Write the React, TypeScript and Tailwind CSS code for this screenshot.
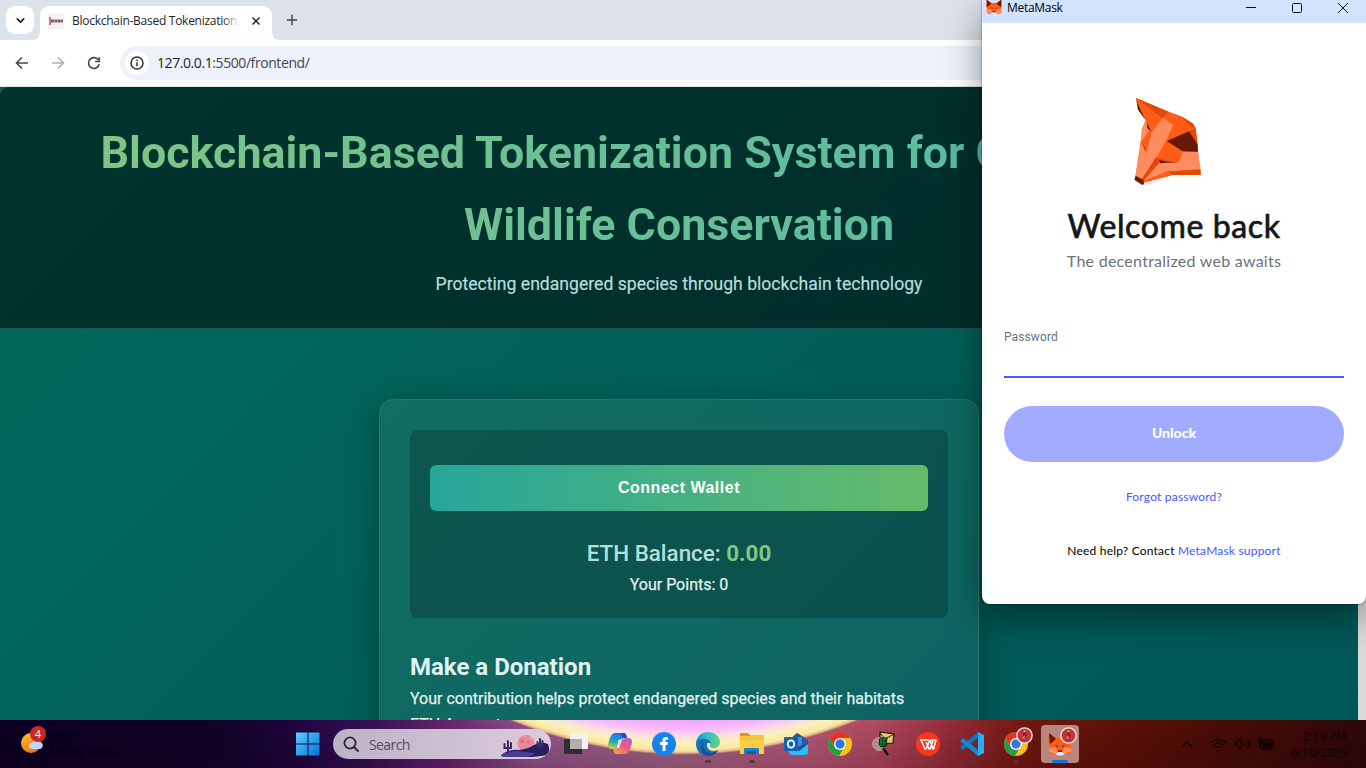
import React from "react";
import { ChevronDown, Plus, Wifi, X } from "lucide-react";

const segoe = "font-['Open_Sans','Noto_Sans',sans-serif]";
const lato = "font-['Lato','Open_Sans',sans-serif]";

function TabStrip() {
  return (
    <div className={`flex h-10 shrink-0 bg-[#dde1e9] ${segoe}`}>
      <div className="mt-[6px] ml-[6px] flex h-7 w-7 items-center justify-center rounded-[9px] bg-white">
        <ChevronDown size={13} strokeWidth={3} color="#1f1f1f" />
      </div>
      <div className="relative mt-[6px] ml-[6px] flex h-[34px] w-[232px] items-center rounded-t-[9px] bg-white pb-[5px] pl-2">
        <svg className="absolute -left-2 bottom-0" width="8" height="8"><path d="M8 0v8H0A8 8 0 0 0 8 0" fill="#fff" /></svg>
        <svg className="absolute -right-2 bottom-0" width="8" height="8"><path d="M0 0v8h8A8 8 0 0 1 0 0" fill="#fff" /></svg>
        <svg width="16" height="16" className="shrink-0">
          <rect width="16" height="16" fill="#f3f3f3" />
          <path d="M2 4v8" stroke="#c9485a" strokeWidth="1.5" />
          <path d="M3 8h12" stroke="#5d4d51" strokeWidth="3" strokeDasharray="3 .4" opacity=".85" />
        </svg>
        <div className="relative ml-2 w-[167px] overflow-hidden text-[12px] tracking-[-0.27px] whitespace-nowrap text-[#1f1f1f]">
          Blockchain-Based Tokenization S
          <div className="absolute top-0 right-0 h-full w-4 bg-gradient-to-r from-transparent to-white" />
        </div>
        <X size={12} strokeWidth={3} color="#1f1f1f" className="ml-[11px] shrink-0" />
      </div>
      <Plus size={16} strokeWidth={2.2} color="#474747" className="mt-3 ml-3" />
    </div>
  );
}

function Toolbar() {
  return (
    <div className="flex h-[47px] shrink-0 items-center border-b border-[#dfe3e3] bg-white pl-[14px]">
      <svg width="16" height="16" viewBox="0 0 16 16" fill="none" stroke="#474747" strokeWidth="1.6"><path d="M14 8H3M8 2.5 2.5 8 8 13.5" /></svg>
      <svg className="ml-5" width="16" height="16" viewBox="0 0 16 16" fill="none" stroke="#aeb0b2" strokeWidth="1.6"><path d="M2 8h11M8 2.5 13.5 8 8 13.5" /></svg>
      <svg className="ml-5" width="16" height="16" viewBox="0 0 16 16" fill="none" stroke="#474747" strokeWidth="1.7">
        <path d="M13.2 9.2A5.4 5.4 0 1 1 12.4 5" /><path d="M13.3 2.3v4.2H9.1" />
      </svg>
      <div className="ml-[18px] flex h-[34px] flex-1 items-center rounded-l-full bg-[#ecf1fa] pl-[5px]">
        <div className="flex h-6 w-6 items-center justify-center rounded-full bg-white">
          <svg width="14" height="14" viewBox="0 0 14 14" fill="none" stroke="#333" strokeWidth="1.5">
            <circle cx="7" cy="7" r="6" /><path d="M7 6.2v4.1M7 3.5V5" />
          </svg>
        </div>
        <span className={`ml-2 -mt-px text-[14px] tracking-[-0.42px] text-[#474747] ${segoe}`}>
          <span className="text-[#1f1f1f]">127.0.0.1</span>:5500/frontend/
        </span>
      </div>
    </div>
  );
}

function DonationPage() {
  return (
    <div className="flex min-h-0 flex-1 overflow-hidden rounded-tl-lg bg-[#dadada] font-[Roboto,sans-serif]">
      <main className="w-[1358px] shrink-0 overflow-hidden bg-[linear-gradient(135deg,#006b5d,#005f58_50%,#005757)]">
        <header className="h-[242px] border-b border-white/15 bg-[linear-gradient(135deg,#00342e,#002b2a)] pt-[30px]">
          <div className="mx-5 bg-[linear-gradient(90deg,#81c784,#4db6ac)] bg-clip-text text-[44.8px] leading-[71.7px] font-bold whitespace-nowrap text-transparent">
            <div className="pl-[80.5px]">Blockchain-Based Tokenization System for C</div>
            <div className="text-center">Wildlife Conservation</div>
          </div>
          <p className="mt-[10px] text-center text-[17.6px] leading-7 text-[#b2dfdb] [-webkit-text-stroke:0.2px_#b2dfdb]">Protecting endangered species through blockchain technology</p>
        </header>
        <section className="mx-auto mt-[70px] h-[420px] w-[600px] rounded-[15px] border border-white/10 bg-[linear-gradient(135deg,#106d61,#0e6262)] p-[30px] shadow-[0_8px_32px_rgba(0,0,0,0.3)]">
          <div className="flex h-[188px] flex-col items-center rounded-lg bg-black/20 px-5 pt-[35px]">
            <button className="h-[46px] w-full rounded-md bg-[linear-gradient(90deg,#26a69a,#66bb6a)] font-['Liberation_Sans',sans-serif] text-[16px] font-bold tracking-[0.5px] text-white">Connect Wallet</button>
            <div className="mt-[24px] text-[22.4px] leading-9 font-medium text-[#b2dfdb]">ETH Balance: <span className="font-bold text-[#81c784]">0.00</span></div>
            <div className="mt-px text-[16px] leading-[26px] text-[#e0f2f1] [-webkit-text-stroke:0.25px_#e0f2f1]">Your Points: 0</div>
          </div>
          <h2 className="mt-[30px] text-[24px] leading-[38px] font-bold text-[#e0f2f1]">Make a Donation</h2>
          <p className="text-[16px] leading-[25.6px] text-[#e0f2f1] [-webkit-text-stroke:0.25px_#e0f2f1]">Your contribution helps protect endangered species and their habitats</p>
          <p className="text-[16px] leading-[25.6px] text-[#e0f2f1] [-webkit-text-stroke:0.25px_#e0f2f1]">ETH Amount</p>
        </section>
      </main>
    </div>
  );
}

function FoxProfile() {
  return (
    <svg className="ml-[-12px]" width="68" height="89" viewBox="72 36 204 267">
      <path fill="#ff5c16" d="M78 39 176 80 212 93 248 115 257 130 264 200 272 270H185L100 294 76 276 92 170 98 130 107 106 84 73Z" />
      <path fill="#e34807" d="m78 39 97 41-17 20Z M212 93l36 22 9 15-18-7Z M190 120l67 10 6 48-25-40Z" />
      <path fill="#ff5c16" d="m190 120 67 10-20 9-67 29Z" />
      <path fill="#ff8d5d" d="m158 99 32 21-22 48-28 50-44 64-20-6 13-78 5-26 14 34 6-24 12-42Z M107 106l10 30-14 22-11 14 3-40Z" />
      <path fill="#ff8d5d" d="M103 286 150 230l55 2 12-32h47l8 53-102 7-62 32Z" />
      <path fill="#e34807" d="m96 281 43-66 66 17-55-2-50 57Z M170 260l102-7v17h-82l-34-2Z" />
      <path fill="#ff5c16" d="m140 218 28-50 50 32-12 32-56-10Z M170 260l20 10-90 22 4-6Z" />
      <path fill="#661800" d="m170 168 67-29 26 39 1 22-46-1Z M148 225l25 6 32 1-55 3Z M78 39l5 17 22 47-21-29Z M110 112l13 27-11-9Z M95 170l12 23-1 2Z M77 272l23 12 2 13-5 3-24-16Z" />
      <path fill="#e7ebf6" d="m102 294 83-22-65 26-17 3Z" />
    </svg>
  );
}

function FoxFace({ size }: { size: number }) {
  return (
    <svg width={size} height={size} viewBox="0 0 24 24">
      <path fill="#ff5c16" d="m1 1 8 5h6l8-5 1 9-2 6 1 5-6 2-3-1h-4l-3 1-6-2 1-5-2-6Z" />
      <path fill="#661800" d="m1 1 7 6-6 5ZM23 1l-7 6 6 5Z" />
      <path fill="#ff8d5d" d="m1 16 7-1 1 5-2 2-6-2ZM23 16l-7-1-1 5 2 2 6-2Z" />
      <path fill="#233447" d="m6 12.500 4 1.500v1.500ZM18 12.500l-4 1.500v1.500ZM10 18.500h4v2h-4Z" />
      <path fill="#e7ebf6" d="m7 22 3-2h4l3 2-3 1.500h-4Z" />
    </svg>
  );
}

function MetaMaskWindow() {
  return (
    <div className={`absolute top-0 left-[982px] flex h-[604px] w-[384px] flex-col overflow-hidden rounded-b-lg bg-white ${lato}`}>
      <div className={`flex h-[23px] shrink-0 bg-[#d3e3fd] ${segoe}`}>
        <div className="mt-[-1px] ml-1"><FoxFace size={16} /></div>
        <span className="ml-[5px] text-[12px] leading-[16px] tracking-[-0.3px] text-black">MetaMask</span>
        <svg className="ml-auto" width="121" height="16" fill="none" stroke="#111" strokeWidth="1">
          <path d="M1 7.500h10M93 3l10 10M103 3 93 13" /><rect x="47.500" y="3.500" width="9" height="9" rx="1" />
        </svg>
      </div>
      <div className="flex flex-1 flex-col items-center px-[22px] pt-[74px]">
        <FoxProfile />
        <h1 className="mt-[18px] text-[32px] leading-[44px] tracking-[0.62px] whitespace-nowrap text-[#141618] [-webkit-text-stroke:0.7px_#141618]">Welcome back</h1>
        <p className="mt-px mb-px text-[16px] leading-6 tracking-[0.26px] whitespace-nowrap text-[#6a737d]">The decentralized web awaits</p>
        <label className="mt-[54px] flex h-[50px] w-full flex-col border-b-2 border-[#4459ff] font-[Roboto,sans-serif] text-[12px] leading-[18px] tracking-[0.1px] text-[#6a737d]">Password</label>
        <button className="mt-7 h-14 w-full shrink-0 rounded-full bg-[#a1abff] pb-[3px] text-[14px] font-black text-white">Unlock</button>
        <div className="mt-[25px] text-[12px] leading-5 tracking-[0.2px] text-[#4459ff]">Forgot password?</div>
        <div className="mt-[34px] text-[12px] leading-5 tracking-[0.2px] text-black">Need help? Contact <span className="text-[#4459ff]">MetaMask support</span></div>
      </div>
    </div>
  );
}

function Wallpaper() {
  return (
    <svg className="absolute inset-0" width="1366" height="48" viewBox="0 720 1366 48">
      <defs>
        <linearGradient id="wall">
          <stop offset="0" stopColor="#0c0022" /><stop offset=".16" stopColor="#110228" /><stop offset=".22" stopColor="#200540" />
          <stop offset=".27" stopColor="#380f55" /><stop offset=".33" stopColor="#68266e" /><stop offset=".39" stopColor="#94558c" />
          <stop offset=".5" stopColor="#a66484" /><stop offset=".59" stopColor="#b65878" /><stop offset=".64" stopColor="#b34a60" />
          <stop offset=".7" stopColor="#942a34" /><stop offset=".75" stopColor="#74170d" /><stop offset=".83" stopColor="#5b1005" />
          <stop offset=".92" stopColor="#440b06" /><stop offset="1" stopColor="#2d0709" />
        </linearGradient>
        <linearGradient id="wallShade" x1="0" y1="0" x2="0" y2="1"><stop stopColor="#000" stopOpacity="0" /><stop offset="1" stopColor="#180010" stopOpacity=".2" /></linearGradient>
        <radialGradient id="arc" gradientUnits="userSpaceOnUse" cx="684" cy="295" r="460">
          <stop offset=".93" stopColor="#f6a9fc" /><stop offset=".946" stopColor="#f9bdf8" /><stop offset=".962" stopColor="#fce0e0" />
          <stop offset=".975" stopColor="#fdf0b8" /><stop offset=".99" stopColor="#fae7a0" /><stop offset=".996" stopColor="#e0b284" /><stop offset="1" stopColor="#b77a80" stopOpacity="0" />
        </radialGradient>
      </defs>
      <rect y="720" width="1366" height="48" fill="url(#wall)" /><rect y="720" width="1366" height="48" fill="url(#wallShade)" />
      <circle cx="684" cy="295" r="460" fill="url(#arc)" />
    </svg>
  );
}

function Slot({ children, running }: { children: React.ReactNode; running?: boolean }) {
  return (
    <div className="relative flex h-12 w-11 shrink-0 items-center justify-center">
      {children}
      {running && <div className="absolute bottom-[5px] left-[19px] h-[3px] w-[6px] rounded-full bg-[#5a3038]/90" />}
    </div>
  );
}

function ChromeIcon() {
  return (
    <svg width="24" height="24" viewBox="0 0 24 24">
      <circle cx="12" cy="12" r="12" fill="#fbc116" />
      <path fill="#df3428" d="M1.600 6a12 12 0 0 1 20.800 0H12L6.800 15Z" />
      <path fill="#269b48" d="M1.600 6 6.800 15l5.200 3 3-1-4 7A12 12 0 0 1 1.600 6" />
      <circle cx="12" cy="12" r="6" fill="#fff" /><circle cx="12" cy="12" r="4.700" fill="#3077e9" />
    </svg>
  );
}

function ProfileBadge() {
  return (
    <svg className="absolute top-[7px] right-[5px]" width="17" height="17" viewBox="0 0 16 16">
      <circle cx="8" cy="8" r="7.200" fill="#b83a38" stroke="#e4eaee" strokeWidth="1.300" />
      <path d="m3 5 2-1 2 4-2 4ZM10 4l3 2-2 6-2-2Z" fill="#d32f30" /><path d="m7 3 2 1 1 4-2 5-2-2Z" fill="#8f2226" /><path d="M7 3h2v2H7ZM6 10l2-2v4Z" fill="#dca596" />
    </svg>
  );
}

function Taskbar() {
  return (
    <div className={`relative flex h-12 shrink-0 ${segoe}`}>
      <Wallpaper />
      <div className="relative flex w-[286px] pt-[5px] pl-5">
        <svg width="28" height="32" viewBox="0 0 28 32">
          <defs><linearGradient id="sun" x1="0" y1="0" x2=".6" y2="1"><stop stopColor="#f9c72f" /><stop offset="1" stopColor="#ef7417" /></linearGradient></defs>
          <circle cx="11" cy="18" r="10" fill="url(#sun)" />
          <path d="M12 24a3 3 0 0 1 0-6 5 5 0 0 1 8-1 3.600 3.600 0 0 1 0 7Z" fill="#bcd5f8" />
          <circle cx="18" cy="9" r="8" fill="#c52b20" />
          <text x="18" y="13" textAnchor="middle" fontSize="11" fill="#fff">4</text>
        </svg>
        <div className="ml-[2px] pt-[3px] text-[12px] leading-4 tracking-[-0.3px] text-[#030108]"><div>78°F</div><div>Mostly sunny</div></div>
      </div>
      <Slot>
        <svg width="24" height="24" viewBox="0 0 24 24">
          <defs><linearGradient id="win" gradientUnits="userSpaceOnUse" x1="0" y1="0" x2="24" y2="24"><stop stopColor="#5bd3ff" /><stop offset="1" stopColor="#0070d8" /></linearGradient></defs>
          <path fill="url(#win)" d="M0 .5h11.500v11H0zM12.500.5h11v11h-11zM0 12.500h11.500v11H0zM12.500 12.500h11v11h-11z" />
        </svg>
      </Slot>
      <div className="relative mt-[9px] ml-[3px] flex h-[30px] w-[218px] items-center overflow-hidden rounded-full bg-[linear-gradient(90deg,#bcb2c7,#decadc)] pl-[10px]">
        <svg width="17" height="17" viewBox="0 0 17 17" fill="none" stroke="#2b2730" strokeWidth="1.800"><circle cx="7" cy="7" r="5.600" /><path d="m11 11 4 4" strokeLinecap="round" /></svg>
        <span className="ml-[9px] text-[14px] tracking-[-0.6px] text-[#56505a]">Search</span>
        <svg className="absolute top-[4px] left-[168px]" width="49" height="25" viewBox="0 0 49 25">
          <circle cx="25" cy="10.500" r="8.500" fill="#ec899b" /><circle cx="21" cy="8" r="2" fill="#d96f86" /><circle cx="27" cy="9" r="1.500" fill="#d96f86" /><circle cx="30" cy="5" r="1" fill="#f7b1b4" />
          <path d="M0 22Q8 16 18 17q9-1 15-5 7-4 14-1 3 8-2 11-8 2-20 2H6q-5 0-6-2" fill="#2a1c60" /><path d="M0 22q10-6 24-3 7 1 11 1-6 4-12 4H6q-5 0-6-2" fill="#4b3d94" />
          <path d="M7 20V8M3.500 11v4H10v-5M39 14V6M36.500 9v3h5V8" fill="none" stroke="#3b2a6c" strokeWidth="2" strokeLinecap="round" />
        </svg>
      </div>
      <div className="flex pl-[3px]">
        <Slot>
          <svg width="24" height="24" viewBox="0 0 24 24">
            <rect x="0" y="7" width="18" height="15" rx="1" fill="#2d2d2d" /><rect x="6" y="1" width="18" height="16" rx="1" fill="#f3f1f1" /><path d="M6 7h12v10H6z" fill="#b1b0ae" />
          </svg>
        </Slot>
        <Slot>
          <svg width="24" height="24" viewBox="0 0 24 24">
            <defs>
              <linearGradient id="copA" x1=".3" y1="0" x2="0" y2="1"><stop stopColor="#1978e5" /><stop offset=".5" stopColor="#26aab4" /><stop offset="1" stopColor="#e8d22e" /></linearGradient>
              <linearGradient id="copB" x1="1" y1="0" x2=".2" y2="1"><stop stopColor="#9f65df" /><stop offset=".5" stopColor="#ed5689" /><stop offset="1" stopColor="#ff9b45" /></linearGradient>
            </defs>
            <path d="M7 1h9q2 0 3 5h-3q-2 0-3 3l-2 6q-1 2-4 2H4q-6 0-3-8Q3 1 7 1" fill="url(#copA)" />
            <path d="M17 22H9q-3 0-4-5h3q3 0 4-4l2-5q1-2 4-2h2q6 0 3 8-2 8-6 8" fill="url(#copB)" />
            <path d="M12 1h4q2 0 3 5h-2q-3 0-5-5" fill="#1452be" />
            <path d="m10 8 4-1-3 9H9.500q-1.500 0 .5-5Z" fill="#fff" opacity=".7" />
          </svg>
        </Slot>
        <Slot>
          <svg width="24" height="24" viewBox="0 0 24 24"><circle cx="12" cy="12" r="12" fill="#1384ed" /><path d="M10.500 19v-6H8v-3h2.500V8.400C10.500 6 12 5 14 5q1.200 0 2 .2v2.500h-1.200c-1 0-1.300.5-1.300 1.300v1H16l-.6 3h-1.900v6Z" fill="#fff" /></svg>
        </Slot>
        <Slot running>
          <svg width="24" height="24" viewBox="0 0 24 24">
            <defs><linearGradient id="edge" x1="0" y1=".4" x2="1" y2=".3"><stop stopColor="#1792d1" /><stop offset=".5" stopColor="#33bfcf" /><stop offset="1" stopColor="#66dc62" /></linearGradient></defs>
            <path d="M0 12C0 5 5 0 12 0s12 5 12 10c0 4-3 6-6 6s-5-1-4-3c1-1 0-5-5-5-4 0-8 2-9 4" fill="url(#edge)" />
            <path d="M0 12q1-5 7-5 8 0 8 5-4-3-4 1c0 5 6 8 11 5-2 4-6 6-10 6C5 24 0 19 0 12" fill="#1370b9" />
            <path d="M9 10c-3 3-2 7 1 9 4 3 8 2 12-1-2 4-6 6-10 6-6-1-10-9-3-14" fill="#164f96" />
          </svg>
        </Slot>
        <Slot running>
          <svg width="24" height="24" viewBox="0 0 24 24">
            <path d="M0 5V2q0-1 1-1h7l3 3v4H0Z" fill="#dc9708" /><rect y="4" width="24" height="18" rx="1" fill="#ffcd43" /><path d="M0 5h9l2-2h12q1 0 1 2v3H0Z" fill="#f7c33c" />
            <path d="M4 22v-5q0-1 1-1h13q1 0 1 1v5Z" fill="#1782d1" /><path d="M7 19h9v3H7z" fill="#0a5d9d" />
          </svg>
        </Slot>
        <Slot>
          <svg width="24" height="24" viewBox="0 0 24 24">
            <path d="m5 8 8-7 11 7v12q0 3-3 3H8q-3 0-3-3Z" fill="#1b73bb" /><path d="m13 1 11 7-8 6-9-7Z" fill="#23599c" /><path d="M7 5h11v10H7z" fill="#3a8fd8" /><path d="m5 17 6 0 13-8v11q0 3-3 3H8q-3 0-3-3Z" fill="#32bbee" /><path d="m11 17 13-8v3l-9 7Z" fill="#17519b" />
            <rect y="5" width="14" height="14" rx="1" fill="#1062b7" /><ellipse cx="7" cy="12" rx="3.200" ry="3.700" fill="none" stroke="#fff" strokeWidth="1.800" />
          </svg>
        </Slot>
        <Slot><ChromeIcon /></Slot>
        <Slot>
          <svg width="24" height="26" viewBox="0 0 24 26" className="mt-[-1px]">
            <path d="m8 1 14 2-1 9-13 1Z" fill="#e4c574" stroke="#1b160d" strokeWidth="1.200" /><path d="m8 2 5 6 9-5" fill="none" stroke="#302412" />
            <circle cx="7" cy="13" r="6.500" fill="#bb8b91" stroke="#a9a1a5" /><path d="M8 7h7l-1 8-5 1-2-3Z" fill="#0a9c38" stroke="#061a0b" /><path d="M10.500 7v9M13 7v9M8 10h7M8 13h6" stroke="#042b10" strokeWidth=".7" /><path d="m11 17 5 7" stroke="#1b1719" strokeWidth="2.400" />
          </svg>
        </Slot>
        <Slot>
          <svg width="24" height="24" viewBox="0 0 24 24"><circle cx="12" cy="12" r="12" fill="#ff351b" /><path d="M4 8h9M5 8l4 9h1l4-9 3 9h.5L20 8h-5M10 10l3 7h1l3-8" fill="none" stroke="#fff" strokeWidth="1.500" strokeLinejoin="round" /></svg>
        </Slot>
        <Slot running>
          <svg width="24" height="24" viewBox="0 0 24 24"><path d="M18 0v6L3 18l-3-3Z" fill="#0879bf" /><path d="m0 9 3-3 15 12v6Z" fill="#1489d0" /><path d="m18 0 6 3v18l-6 3Z" fill="#2aaef3" /></svg>
        </Slot>
        <Slot running><ChromeIcon /><ProfileBadge /></Slot>
        <Slot>
          <div className="absolute top-[5px] left-[3px] h-[38px] w-[38px] rounded bg-[#b98580]" />
          <div className="relative"><FoxFace size={24} /></div><ProfileBadge />
          <div className="absolute bottom-[5px] left-[14px] h-[3px] w-4 rounded-full bg-[#0b78d8]" />
        </Slot>
      </div>
      <div className="relative ml-auto flex items-center pr-[19px] text-[#120202]">
        <svg width="12" height="8" fill="none" stroke="currentColor" strokeWidth="1.300" className="mr-[17px]"><path d="m1 7 5-5 5 5" /></svg>
        <Wifi size={17} strokeWidth={1.7} className="mr-[7px]" />
        <svg width="17" height="16" viewBox="0 0 17 16" fill="none" stroke="currentColor" strokeWidth="1.100" className="mr-[7px]"><path d="M1 6v4h2l4 4V2L3 6ZM9 6q1.500 2 0 4M11 4q3.500 4 0 8M13 2q5 6 0 12" /></svg>
        <svg width="17" height="14" viewBox="0 0 17 14" fill="none" stroke="currentColor" strokeWidth="1.300"><rect x="2" y="3" width="12" height="9" rx="2" /><path d="M5 6h7v4H5z" fill="currentColor" /><path d="M15.500 6v3" strokeWidth="2" /><path d="M3 0 0 5h4L2 9" strokeWidth="1.600" /></svg>
        <div className="ml-[15px] w-[57px] pt-px text-right text-[12px] leading-4 tracking-[-0.1px] whitespace-nowrap"><div>2:19 PM</div><div>6/10/2025</div></div>
      </div>
    </div>
  );
}

export default function App() {
  return (
    <div className="relative flex h-[768px] w-[1366px] flex-col overflow-hidden bg-[#006257]">
      <TabStrip />
      <Toolbar />
      <DonationPage />
      <div className="pointer-events-none absolute top-0 left-[982px] h-[604px] w-[384px] rounded-b-lg shadow-[0_14px_36px_rgba(0,0,0,0.42),0_0_2px_rgba(0,0,0,0.6)]" />
      <MetaMaskWindow />
      <Taskbar />
    </div>
  );
}
